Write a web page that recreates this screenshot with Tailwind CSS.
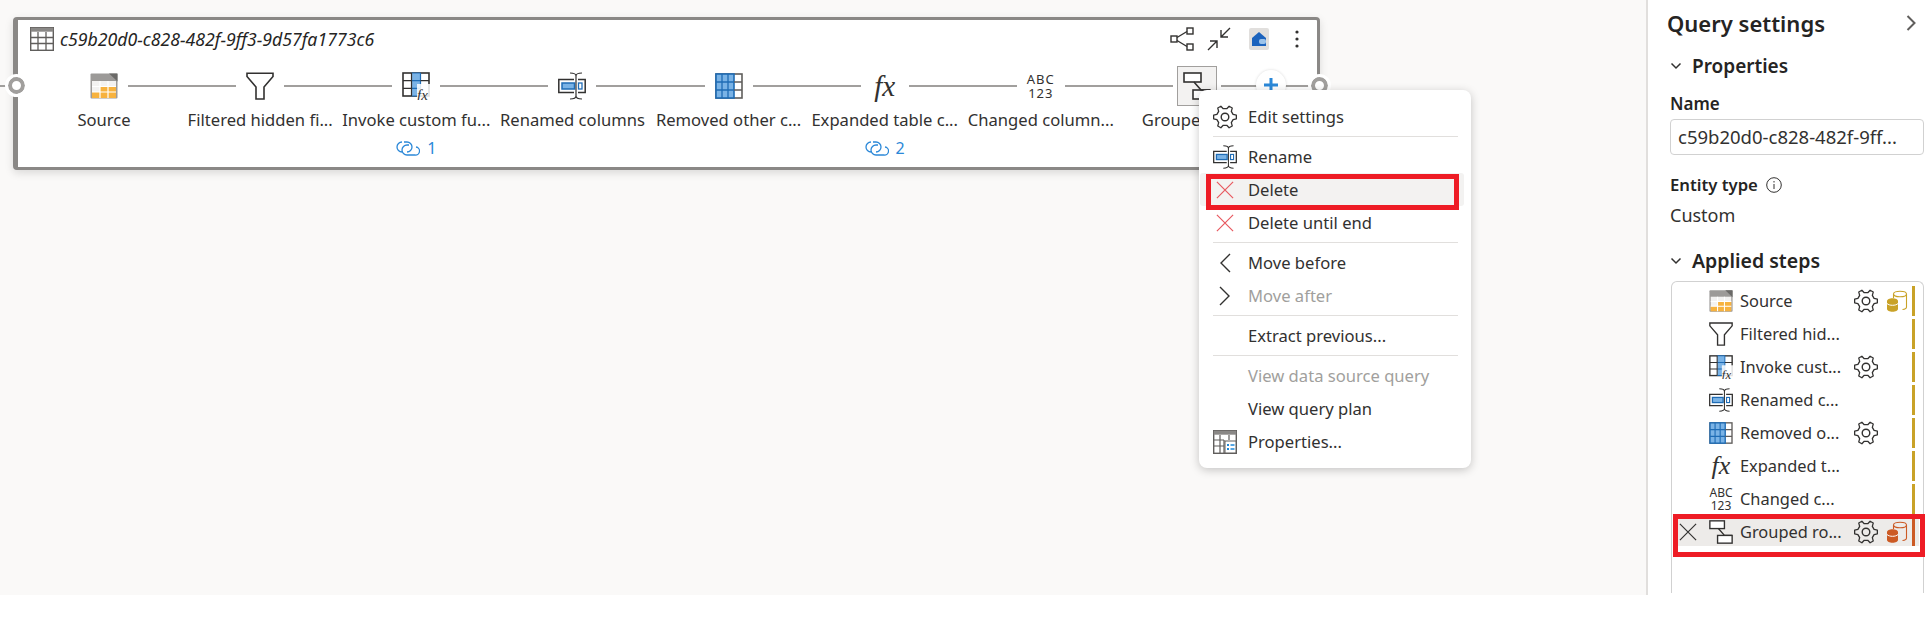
<!DOCTYPE html>
<html>
<head>
<meta charset="utf-8">
<script src="https://cdn.jsdelivr.net/npm/@tailwindcss/browser@4"></script>
</head>
<body class="bg-white font-['Noto_Sans','Open_Sans',sans-serif] text-[#323130]">
<svg width="0" height="0" class="absolute">
  <defs>
    <symbol id="gear" viewBox="0 0 24 24"><path d="M20.080 9.370L23.360 10.200V13.800L20.080 14.630L18.320 17.690L19.240 20.940L16.120 22.740L13.770 20.310H10.230L7.880 22.740L4.760 20.940L5.680 17.690L3.920 14.630L.64 13.800V10.200L3.920 9.370L5.680 6.310L4.760 3.060L7.880 1.260L10.230 3.690H13.770L16.120 1.260L19.240 3.060L18.320 6.310z" fill="none" stroke="#323130" stroke-width="1.300" stroke-linejoin="round"/><circle cx="12" cy="12" r="3.800" fill="none" stroke="#323130" stroke-width="1.400"/></symbol>
    <symbol id="rename" viewBox="0 0 28 28"><path d="M16 7.500H.8v13H16M20 7.500h7.200v13H20" fill="none" stroke="#323130" stroke-width="1.500"/><rect x="4" y="11" width="12.500" height="6" fill="#7ab3e6" stroke="#1f6cb5" stroke-width="1.500"/><rect x="20.500" y="11" width="3.500" height="6" fill="none" stroke="#1f6cb5" stroke-width="1.300"/><path d="M12 1c4 0 6 1 6 3v20c0 2-2 3-6 3M24 1c-4 0-6 1-6 3v20c0 2 2 3 6 3" fill="none" stroke="#323130" stroke-width="1.200"/></symbol>
    <symbol id="source" viewBox="0 0 28 26"><rect x="0.500" y="0.500" width="27" height="25" rx="1" fill="#9c9a98"/><rect x="2" y="8" width="24" height="16" fill="#f3f2f1"/><rect x="10" y="13.500" width="16" height="5.500" fill="#f7b23e"/><rect x="2" y="19" width="24" height="6" fill="#f7b23e"/><path d="M10 8v17M18 8v17M2 13.500h24M2 19h24" stroke="#fff" stroke-width="1.200"/><path d="M19 0.500h8.500v8z" fill="#6b6a68"/></symbol>
    <symbol id="funnel" viewBox="0 0 28 28"><path d="M1 1.200h26v3.300L18 15v12h-8V15L1 4.500z" fill="none" stroke="#323130" stroke-width="1.600"/></symbol>
    <symbol id="invoke" viewBox="0 0 28 28"><rect x="1" y="1" width="26" height="23" fill="#fff" stroke="#323130" stroke-width="1.600"/><rect x="9.500" y="1" width="9" height="23" fill="#7ab3e6"/><path d="M9.500 8.700h9M9.500 16.300h9M18.500 1v23M9.500 1h9M9.500 24h9" stroke="#1f6cb5" stroke-width="1.200"/><path d="M1 8.700h8.500M1 16.300h8.500M9.500 1v23M18.500 8.700h8.500" stroke="#323130" stroke-width="1.200"/><rect x="15" y="12" width="13" height="16" fill="#fff" opacity=".85"/><text x="15" y="27.500" font-family="Liberation Serif" font-style="italic" font-size="15" fill="#323130">fx</text></symbol>
    <symbol id="removed" viewBox="0 0 28 26"><rect x="1" y="1" width="26" height="24" fill="#fff" stroke="#605e5c" stroke-width="1.600"/><rect x="1" y="1" width="18" height="24" fill="#7ab3e6" stroke="#1f6cb5" stroke-width="1.600"/><path d="M1 9h18M1 17h18M7 1v24M13 1v24" stroke="#1f6cb5" stroke-width="1.300"/><path d="M19 9h8M19 17h8" stroke="#605e5c" stroke-width="1.300"/></symbol>
    <symbol id="group" viewBox="0 0 28 28"><rect x="1" y="1" width="17" height="9" fill="#fff" stroke="#323130" stroke-width="1.600"/><rect x="10" y="18" width="17" height="9" fill="#fff" stroke="#323130" stroke-width="1.600"/><path d="M11 10l7 8h9" fill="none" stroke="#323130" stroke-width="1.600"/></symbol>
    <symbol id="x" viewBox="0 0 20 20"><path d="M1 1l18 18M19 1L1 19" fill="none" stroke="currentColor" stroke-width="1.300"/></symbol>
    <symbol id="db" viewBox="0 0 22 22"><ellipse cx="14" cy="4" rx="6.500" ry="2.800" fill="none" stroke="currentColor" stroke-width="1.100"/><path d="M7.500 4v4M20.500 4v13c0 1-1.500 2.200-4 2.500" fill="none" stroke="currentColor" stroke-width="1.100"/><path d="M1 11c0-1.600 2.500-2.800 5.500-2.800S12 9.400 12 11v8c0 1.600-2.500 2.800-5.500 2.800S1 20.600 1 19z" fill="currentColor"/><path d="M1 13.500c1.200 1.300 3.300 1.800 5.500 1.800s4.300-.5 5.500-1.800" fill="none" stroke="#fff" stroke-width="1"/></symbol>
  </defs>
</svg>

<div class="flex h-[627px] w-[1930px] overflow-hidden">
  <main class="relative h-[595px] w-[1646px] shrink-0 bg-[#faf9f8] pt-[17px] pl-[13px]">
    <span class="absolute left-0 top-[85px] h-[2px] w-[8px] bg-[#a19f9d]"></span>
    <!-- Query card -->
    <section class="relative h-[153px] w-[1307px] rounded-[4px] border-[3px] border-l-[5px] border-[#8a8886] bg-white shadow-[0_3px_8px_rgba(0,0,0,0.13)]">
      <div class="flex h-[36px] items-center pl-[12px] pt-[2px]">
        <svg class="h-[24px] w-[24px]" viewBox="0 0 24 24"><rect x="0.700" y="0.700" width="22.600" height="22.600" fill="#fff" stroke="#605e5c" stroke-width="1.400"/><rect x="0.700" y="0.700" width="22.600" height="4" fill="#8a8886"/><path d="M1 10.500h22M1 16.500h22M8 5v18M16 5v18" stroke="#605e5c" stroke-width="1.300"/></svg>
        <span class="ml-[6px] text-[17.700px] italic leading-5 text-[#252423]">c59b20d0-c828-482f-9ff3-9d57fa1773c6</span>
        <div class="ml-auto mr-[18px] flex items-center">
          <svg class="mr-[13px] h-[24px] w-[24px]" viewBox="0 0 24 24" fill="none" stroke="#323130" stroke-width="1.400"><rect x="1" y="9" width="6" height="6"/><rect x="17" y="1" width="6" height="6"/><rect x="17" y="17" width="6" height="6"/><path d="M7 10.500L17 4.500M7 13.500l10 6"/></svg>
          <svg class="mr-[18px] h-[24px] w-[24px]" viewBox="0 0 24 24" fill="none" stroke="#323130" stroke-width="1.400"><path d="M23 1L14 10M14 3v7h7M1 23l9-9M3 14h7v7"/></svg>
          <span class="mr-[26px] flex h-[22px] w-[20px] items-center justify-center rounded-[2px] bg-[#e1dfdd]"><svg class="h-[16px] w-[16px]" viewBox="0 0 16 16"><path d="M8 1L1 7v8h14V7z" fill="#1c63bd"/><rect x="8" y="8" width="7" height="5" rx="2" fill="#9cc3ea"/></svg></span>
          <svg class="h-[20px] w-[4px]" viewBox="0 0 4 20" fill="#323130"><circle cx="2" cy="3" r="1.600"/><circle cx="2" cy="10" r="1.600"/><circle cx="2" cy="17" r="1.600"/></svg>
        </div>
      </div>

      <!-- Steps -->
      <div class="flex pl-[8px] pt-[10px] text-[16.600px] leading-5">
        <div class="flex w-[156.300px] flex-col items-center"><div class="flex h-[40px] w-full items-center"><span class="flex-1"></span><svg class="mx-[10px] h-[26px] w-[28px]"><use href="#source"/></svg><span class="h-[2px] flex-1 bg-[#a19f9d]"></span></div><span class="mt-[4px] whitespace-nowrap">Source</span></div>
        <div class="flex w-[156.300px] flex-col items-center"><div class="flex h-[40px] w-full items-center"><span class="h-[2px] flex-1 bg-[#a19f9d]"></span><svg class="mx-[10px] h-[28px] w-[28px]"><use href="#funnel"/></svg><span class="h-[2px] flex-1 bg-[#a19f9d]"></span></div><span class="mt-[4px] whitespace-nowrap">Filtered hidden fi...</span></div>
        <div class="flex w-[156.300px] flex-col items-center"><div class="flex h-[40px] w-full items-center"><span class="h-[2px] flex-1 bg-[#a19f9d]"></span><svg class="mx-[10px] h-[28px] w-[28px]"><use href="#invoke"/></svg><span class="h-[2px] flex-1 bg-[#a19f9d]"></span></div><span class="mt-[4px] whitespace-nowrap">Invoke custom fu...</span><span class="mt-[8px] flex items-center gap-[7px] text-[16px] leading-5 text-[#2b88d8]"><svg class="h-[16px] w-[24px]" viewBox="0 0 24 16" fill="none" stroke="#2b88d8" stroke-width="1.300"><path d="M8 2h3a5 5 0 0 1 0 10M7 12H6A5 5 0 0 1 6 2M13 5h-2a5 5 0 0 0 0 10h8a4 4 0 0 0 1-8"/></svg>1</span></div>
        <div class="flex w-[156.300px] flex-col items-center"><div class="flex h-[40px] w-full items-center"><span class="h-[2px] flex-1 bg-[#a19f9d]"></span><svg class="mx-[10px] h-[28px] w-[28px]"><use href="#rename"/></svg><span class="h-[2px] flex-1 bg-[#a19f9d]"></span></div><span class="mt-[4px] whitespace-nowrap">Renamed columns</span></div>
        <div class="flex w-[156.300px] flex-col items-center"><div class="flex h-[40px] w-full items-center"><span class="h-[2px] flex-1 bg-[#a19f9d]"></span><svg class="mx-[10px] h-[26px] w-[28px]"><use href="#removed"/></svg><span class="h-[2px] flex-1 bg-[#a19f9d]"></span></div><span class="mt-[4px] whitespace-nowrap">Removed other c...</span></div>
        <div class="flex w-[156.300px] flex-col items-center"><div class="flex h-[40px] w-full items-center"><span class="h-[2px] flex-1 bg-[#a19f9d]"></span><span class="mx-[10px] w-[28px] text-center font-['Liberation_Serif'] text-[29px] italic leading-[28px]">fx</span><span class="h-[2px] flex-1 bg-[#a19f9d]"></span></div><span class="mt-[4px] whitespace-nowrap">Expanded table c...</span><span class="mt-[8px] flex items-center gap-[7px] text-[16px] leading-5 text-[#2b88d8]"><svg class="h-[16px] w-[24px]" viewBox="0 0 24 16" fill="none" stroke="#2b88d8" stroke-width="1.300"><path d="M8 2h3a5 5 0 0 1 0 10M7 12H6A5 5 0 0 1 6 2M13 5h-2a5 5 0 0 0 0 10h8a4 4 0 0 0 1-8"/></svg>2</span></div>
        <div class="flex w-[156.300px] flex-col items-center"><div class="flex h-[40px] w-full items-center"><span class="h-[2px] flex-1 bg-[#a19f9d]"></span><span class="mx-[10px] h-[28px] w-[28px] whitespace-nowrap text-center text-[13px] leading-[14px] tracking-[1px]">ABC<br>123</span><span class="h-[2px] flex-1 bg-[#a19f9d]"></span></div><span class="mt-[4px] whitespace-nowrap">Changed column...</span></div>
        <div class="flex w-[156.300px] flex-col items-center"><div class="flex h-[40px] w-full items-center"><span class="h-[2px] flex-1 bg-[#a19f9d]"></span><span class="mx-[4px] flex h-[40px] w-[40px] items-center justify-center border border-[#a19f9d] bg-[#f3f2f1]"><svg class="h-[28px] w-[28px]"><use href="#group"/></svg></span><span class="h-[2px] flex-1 bg-[#a19f9d]"></span></div><span class="mt-[4px] whitespace-nowrap">Grouped rows</span></div>
        <div class="flex h-[40px] w-[42px] items-center"><span class="h-[2px] w-full bg-[#a19f9d]"></span></div>
      </div>

      <!-- ports and add button -->
      <span class="absolute left-[-10px] top-[57px] h-[17px] w-[17px] rounded-full border-[4px] border-[#a19f9d] bg-white outline-[3px] outline-white"></span>
      <span class="absolute right-[-11px] top-[57px] h-[17px] w-[17px] rounded-full border-[4px] border-[#a19f9d] bg-white outline-[3px] outline-white"></span>
      <span class="absolute left-[1238px] top-[50px] flex h-[30px] w-[30px] items-center justify-center rounded-full bg-white shadow-[0_0_3px_rgba(0,0,0,0.15)]"><svg class="h-[16px] w-[16px]" viewBox="0 0 16 16" stroke="#2b88d8" stroke-width="3"><path d="M8 1v14M1 8h14"/></svg></span>
    </section>

    <!-- Context menu -->
    <nav class="absolute left-[1199px] top-[90px] z-10 w-[272px] rounded-[8px] bg-white py-[10px] pl-[1px] text-[16.600px] leading-5 shadow-[0_2px_10px_rgba(0,0,0,0.22)]">
      <div class="flex h-[33px] items-center"><svg class="ml-[13px] mr-[11px] h-[24px] w-[24px]"><use href="#gear"/></svg>Edit settings</div>
      <div class="mx-[13px] my-[3px] h-[1px] bg-[#e1dfdd]"></div>
      <div class="flex h-[33px] items-center"><svg class="ml-[13px] mr-[11px] h-[24px] w-[24px]"><use href="#rename"/></svg>Rename</div>
      <div class="flex h-[33px] w-[264px] items-center rounded-[3px] bg-[#f3f2f1]"><svg class="ml-[16px] mr-[14px] h-[18px] w-[18px] text-[#e8585f]"><use href="#x"/></svg>Delete</div>
      <div class="flex h-[33px] items-center"><svg class="ml-[16px] mr-[14px] h-[18px] w-[18px] text-[#e8585f]"><use href="#x"/></svg>Delete until end</div>
      <div class="mx-[13px] my-[3px] h-[1px] bg-[#e1dfdd]"></div>
      <div class="flex h-[33px] items-center"><svg class="ml-[19px] mr-[17px] h-[20px] w-[12px]" viewBox="0 0 12 20" fill="none" stroke="#323130" stroke-width="1.400"><path d="M11 1L2 10l9 9"/></svg>Move before</div>
      <div class="flex h-[33px] items-center text-[#a19f9d]"><svg class="ml-[19px] mr-[17px] h-[20px] w-[12px]" viewBox="0 0 12 20" fill="none" stroke="#323130" stroke-width="1.400"><path d="M1 1l9 9-9 9"/></svg>Move after</div>
      <div class="mx-[13px] my-[3px] h-[1px] bg-[#e1dfdd]"></div>
      <div class="flex h-[33px] items-center pl-[48px]">Extract previous...</div>
      <div class="mx-[13px] my-[3px] h-[1px] bg-[#e1dfdd]"></div>
      <div class="flex h-[33px] items-center pl-[48px] text-[#a19f9d]">View data source query</div>
      <div class="flex h-[33px] items-center pl-[48px]">View query plan</div>
      <div class="flex h-[33px] items-center"><svg class="ml-[13px] mr-[11px] h-[24px] w-[24px]" viewBox="0 0 24 24"><rect x="0.700" y="0.700" width="22.600" height="22.600" fill="#fff" stroke="#605e5c" stroke-width="1.400"/><rect x="0.700" y="0.700" width="22.600" height="4" fill="#8a8886"/><path d="M1 10h10M1 16h10M7 5v18M11 10v13M16 5v5" stroke="#605e5c" stroke-width="1.200"/><rect x="12" y="11" width="11" height="12" fill="#fff" stroke="#605e5c" stroke-width="1"/><path d="M14 14h2v2h-2zM14 18h2v2h-2z" fill="#1f88d8"/><path d="M17.500 15h4M17.500 19h4" stroke="#1f88d8" stroke-width="1.500"/></svg>Properties...</div>
    </nav>

    <!-- Red callout over menu item -->
    <div class="absolute left-[1206px] top-[174px] z-20 h-[36px] w-[253px] border-[5px] border-[#ee1c25]"></div>
  </main>

  <!-- Query settings panel -->
  <aside class="relative h-[595px] flex-1 border-l-2 border-[#e1dfdd] bg-white pl-[19px]">
    <div class="flex h-[46px] items-center justify-between pr-[14px]">
      <h2 class="whitespace-nowrap text-[22px] font-semibold leading-6 text-[#252423]">Query settings</h2>
      <svg class="h-[16px] w-[10px]" viewBox="0 0 10 16" fill="none" stroke="#605e5c" stroke-width="2"><path d="M1.500 1l7 7-7 7"/></svg>
    </div>
    <div class="mt-[2px] flex h-[36px] items-center pl-[3px]"><svg class="h-[8px] w-[12px]" viewBox="0 0 12 8" fill="none" stroke="#323130" stroke-width="1.500"><path d="M1.500 1.500L6 6l4.500-4.500"/></svg><span class="ml-[10px] text-[19px] font-semibold leading-5 text-[#252423]">Properties</span></div>
    <div class="mt-[10px] pl-[3px] text-[17px] font-semibold leading-5 text-[#252423]">Name</div>
    <div class="ml-[3px] mt-[5px] flex h-[36px] w-[254px] items-center rounded-[4px] border border-[#d1d1d1] px-[7px] text-[18.500px] whitespace-nowrap text-[#323130]">c59b20d0-c828-482f-9ff...</div>
    <div class="mt-[20px] flex items-center pl-[3px] text-[16.700px] font-semibold leading-5 text-[#252423]">Entity type<svg class="ml-[8px] h-[16px] w-[16px]" viewBox="0 0 16 16" fill="none" stroke="#323130"><circle cx="8" cy="8" r="7.300"/><path d="M8 7v5M8 4v1.500"/></svg></div>
    <div class="mt-[10px] pl-[3px] text-[18px] leading-5">Custom</div>
    <div class="mt-[18px] flex h-[36px] items-center pl-[3px]"><svg class="h-[8px] w-[12px]" viewBox="0 0 12 8" fill="none" stroke="#323130" stroke-width="1.500"><path d="M1.500 1.500L6 6l4.500-4.500"/></svg><span class="ml-[10px] text-[19.500px] font-semibold leading-5 text-[#252423]">Applied steps</span></div>

    <div class="ml-[4px] mt-[2px] h-[312px] w-[253px] rounded-t-[6px] border-x border-t border-[#d1d1d1] pt-[2px] text-[16.400px] leading-5">
      <div class="flex h-[33px] items-center pl-[37px]"><svg class="h-[26px] w-[24px]"><use href="#source"/></svg><span class="ml-[7px] w-[114px] whitespace-nowrap">Source</span><svg class="h-[24px] w-[24px]"><use href="#gear"/></svg><svg class="ml-[8px] h-[22px] w-[22px] text-[#c9a227]"><use href="#db"/></svg><span class="ml-[4px] h-[30px] w-[3px] bg-[#c9a227]"></span></div>
      <div class="flex h-[33px] items-center pl-[37px]"><svg class="h-[24px] w-[24px]"><use href="#funnel"/></svg><span class="ml-[7px] w-[114px] whitespace-nowrap">Filtered hid...</span><span class="w-[24px]"></span><span class="ml-[8px] w-[22px]"></span><span class="ml-[4px] h-[30px] w-[3px] bg-[#c9a227]"></span></div>
      <div class="flex h-[33px] items-center pl-[37px]"><svg class="h-[24px] w-[24px]"><use href="#invoke"/></svg><span class="ml-[7px] w-[114px] whitespace-nowrap">Invoke cust...</span><svg class="h-[24px] w-[24px]"><use href="#gear"/></svg><span class="ml-[8px] w-[22px]"></span><span class="ml-[4px] h-[30px] w-[3px] bg-[#c9a227]"></span></div>
      <div class="flex h-[33px] items-center pl-[37px]"><svg class="h-[24px] w-[24px]"><use href="#rename"/></svg><span class="ml-[7px] w-[114px] whitespace-nowrap">Renamed c...</span><span class="w-[24px]"></span><span class="ml-[8px] w-[22px]"></span><span class="ml-[4px] h-[30px] w-[3px] bg-[#c9a227]"></span></div>
      <div class="flex h-[33px] items-center pl-[37px]"><svg class="h-[22px] w-[24px]"><use href="#removed"/></svg><span class="ml-[7px] w-[114px] whitespace-nowrap">Removed o...</span><svg class="h-[24px] w-[24px]"><use href="#gear"/></svg><span class="ml-[8px] w-[22px]"></span><span class="ml-[4px] h-[30px] w-[3px] bg-[#c9a227]"></span></div>
      <div class="flex h-[33px] items-center pl-[37px]"><span class="w-[24px] text-center font-['Liberation_Serif'] text-[26px] italic leading-[24px]">fx</span><span class="ml-[7px] w-[114px] whitespace-nowrap">Expanded t...</span><span class="w-[24px]"></span><span class="ml-[8px] w-[22px]"></span><span class="ml-[4px] h-[30px] w-[3px] bg-[#c9a227]"></span></div>
      <div class="flex h-[33px] items-center pl-[37px]"><span class="w-[24px] whitespace-nowrap text-center text-[12px] leading-[13px]">ABC<br>123</span><span class="ml-[7px] w-[114px] whitespace-nowrap">Changed c...</span><span class="w-[24px]"></span><span class="ml-[8px] w-[22px]"></span><span class="ml-[4px] h-[30px] w-[3px] bg-[#c9a227]"></span></div>
      <div class="ml-[6px] mt-[2px] flex h-[29px] w-[241px] items-center bg-[#edebe9]"><svg class="ml-[1px] h-[18px] w-[18px] text-[#323130]"><use href="#x"/></svg><span class="w-[12px]"></span><svg class="h-[24px] w-[24px]"><use href="#group"/></svg><span class="ml-[7px] w-[114px] whitespace-nowrap">Grouped ro...</span><svg class="h-[24px] w-[24px]"><use href="#gear"/></svg><svg class="ml-[8px] h-[22px] w-[22px] text-[#cc5a24]"><use href="#db"/></svg><span class="ml-[4px] h-[28px] w-[3px] bg-[#cc5a24]"></span></div>
    </div>

    <!-- Red callout over last step -->
    <div class="absolute left-[25px] top-[514px] z-20 h-[43px] w-[252px] border-[5px] border-[#ee1c25]"></div>
  </aside>
</div>
</body>
</html>
